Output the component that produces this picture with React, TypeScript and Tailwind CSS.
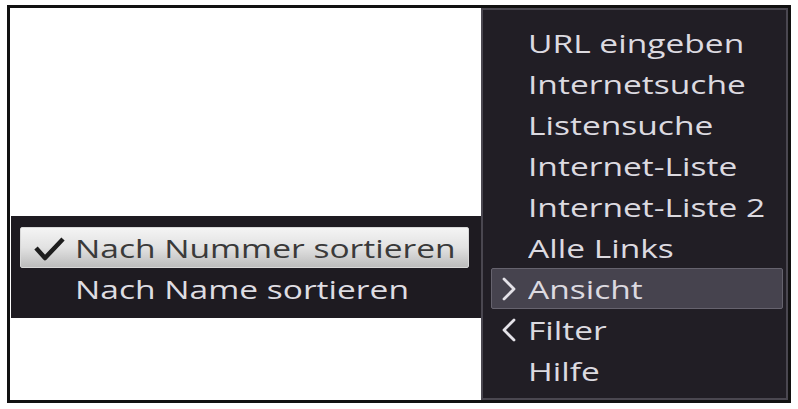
import React from "react";

const menu = [
  "URL eingeben",
  "Internetsuche",
  "Listensuche",
  "Internet-Liste",
  "Internet-Liste 2",
  "Alle Links",
  "Ansicht",
  "Filter",
  "Hilfe",
];

function Chevron({ dir }: { dir: "right" | "left" }) {
  return (
    <svg width="16" height="26" viewBox="0 0 16 26" className="ml-[9px]">
      <polyline
        points={dir === "right" ? "3,3 13,13 3,23" : "13,3 3,13 13,23"}
        fill="none"
        stroke="#e4e2e8"
        strokeWidth="2.8"
        strokeLinecap="round"
        strokeLinejoin="round"
      />
    </svg>
  );
}

function Label({ text, className }: { text: string; className: string }) {
  return (
    <span
      className={
        "inline-block origin-left scale-x-[1.29] whitespace-nowrap text-[26px] leading-[30px] " +
        className
      }
    >
      {text}
    </span>
  );
}

export default function App() {
  return (
    <div className="w-[798px] h-[409px] bg-white pt-[5px] px-[7px] pb-[6px] font-['Open_Sans',sans-serif]">
      <div className="h-full flex border-[3px] border-[#111]">
        <div className="flex-1 flex flex-col pt-[208px]">
          <div className="ml-[1px] h-[102px] bg-[#1e1b21] pt-[11px] pl-[9px] pr-[12px]">
            <div className="h-[41px] flex items-center rounded-[2px] border border-[#d8d8d8] bg-gradient-to-b from-[#f4f4f4] via-[#e2e2e2] to-[#bcbcbc]">
              <div className="w-[54px] pl-[12px] flex items-center">
                <svg width="32" height="26" viewBox="0 0 32 26">
                  <polyline
                    points="3,13 12,23 30,4"
                    fill="none"
                    stroke="#1d1d1d"
                    strokeWidth="4.5"
                    strokeLinejoin="round"
                  />
                </svg>
              </div>
              <Label text="Nach Nummer sortieren" className="text-[#3a3a3a]" />
            </div>
            <div className="h-[41px] flex items-center pl-[55px]">
              <Label text="Nach Name sortieren" className="text-[#dedde2]" />
            </div>
          </div>
        </div>
        <div className="w-[307px] bg-[#211e25] border-2 border-[#4a4750] pt-[12px]">
          {menu.map((m) => {
            const active = m === "Ansicht";
            return (
              <div
                key={m}
                className={
                  "ml-[8px] w-[292px] h-[41px] flex items-center rounded-[2px] border " +
                  (active ? "bg-[#46434e] border-[#66636e]" : "border-transparent")
                }
              >
                <div className="w-[36px] flex items-center">
                  {m === "Ansicht" && <Chevron dir="right" />}
                  {m === "Filter" && <Chevron dir="left" />}
                </div>
                <Label text={m} className="text-[#dcdae0]" />
              </div>
            );
          })}
        </div>
      </div>
    </div>
  );
}
